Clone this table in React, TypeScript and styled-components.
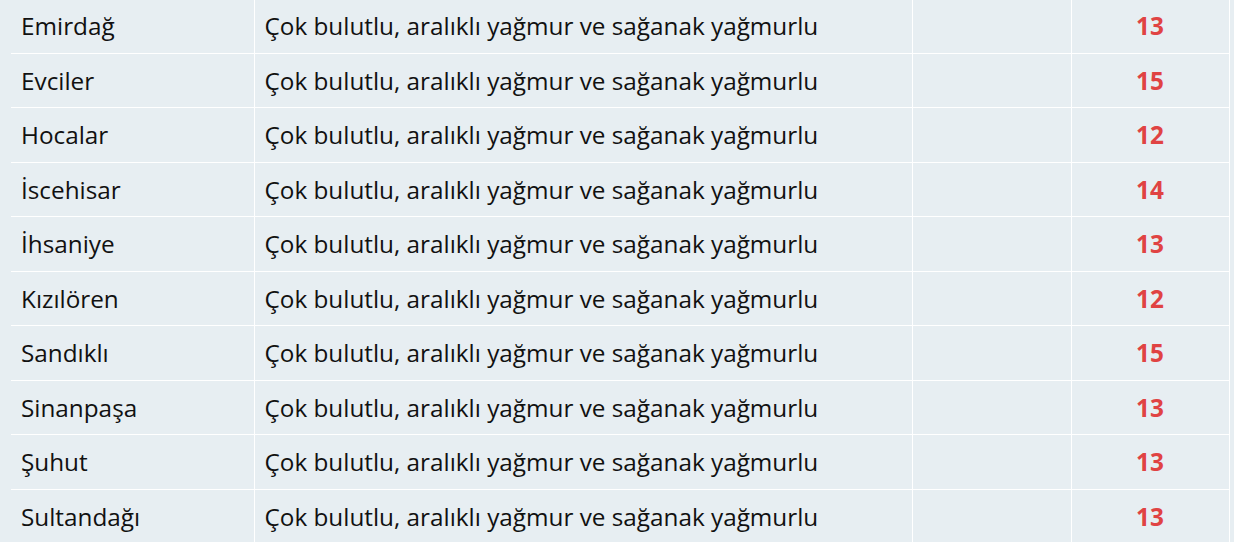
import React from "react";
import styled, { createGlobalStyle } from "styled-components";

const Global = createGlobalStyle`
  html, body { margin: 0; padding: 0; background: #e7eef2; }
  body { font-family: "Open Sans", "Noto Sans", sans-serif; overflow: hidden; }
`;

const Wrap = styled.div`
  padding-left: 11px;
  margin-top: -2px;
`;

const Table = styled.table`
  border-collapse: collapse;
  width: 1218px;
  table-layout: fixed;
  background: #e7eef2;
`;

const Col = styled.col<{ $w: number }>`
  width: ${(p) => p.$w}px;
`;

const Row = styled.tr`
  height: 54.5px;
`;

const Cell = styled.td<{ $num?: boolean }>`
  box-sizing: border-box;
  border: 1px solid #ffffff;
  padding: 0 10px;
  font-size: 24.3px;
  color: ${(p) => (p.$num ? "#e04343" : "#111111")};
  font-weight: ${(p) => (p.$num ? 700 : 400)};
  text-align: ${(p) => (p.$num ? "center" : "left")};
  vertical-align: middle;
  white-space: nowrap;
  overflow: hidden;
  &:first-child { border-left: none; }
`;

const rows: [string, number][] = [
  ["Emirdağ", 13],
  ["Evciler", 15],
  ["Hocalar", 12],
  ["İscehisar", 14],
  ["İhsaniye", 13],
  ["Kızılören", 12],
  ["Sandıklı", 15],
  ["Sinanpaşa", 13],
  ["Şuhut", 13],
  ["Sultandağı", 13],
];

const desc = "Çok bulutlu, aralıklı yağmur ve sağanak yağmurlu";

export default function App() {
  return (
    <>
      <Global />
      <Wrap>
        <Table>
          <colgroup>
            <Col $w={243} />
            <Col $w={658} />
            <Col $w={159} />
            <Col $w={158} />
          </colgroup>
          <tbody>
            {rows.map(([name, t]) => (
              <Row key={name}>
                <Cell>{name}</Cell>
                <Cell>{desc}</Cell>
                <Cell></Cell>
                <Cell $num>{t}</Cell>
              </Row>
            ))}
          </tbody>
        </Table>
      </Wrap>
    </>
  );
}
